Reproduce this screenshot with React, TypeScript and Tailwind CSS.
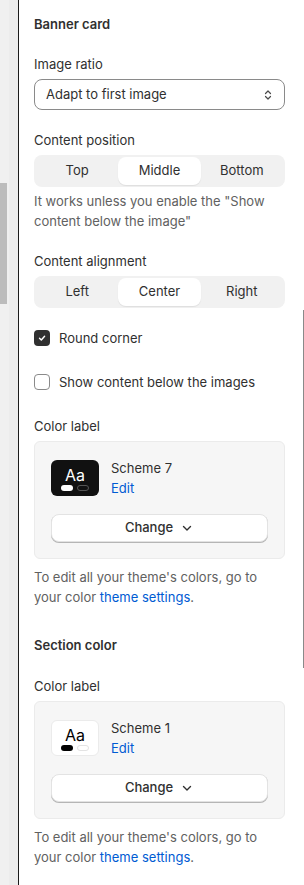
import React from 'react';

const font = { fontFamily: 'Inter, "Noto Sans", sans-serif' };

function Segmented({ options, active }: { options: string[]; active: string }) {
  return (
    <div className="flex h-[32px] rounded-lg bg-[#f1f1f1] p-[2px]">
      {options.map((o) => (
        <div
          key={o}
          className={
            o === active
              ? 'flex flex-1 items-center justify-center rounded-lg bg-white text-[13px] text-[#303030] shadow-[0_1px_1px_rgba(0,0,0,0.08)]'
              : 'flex flex-1 items-center justify-center text-[13px] text-[#303030]'
          }
        >
          {o}
        </div>
      ))}
    </div>
  );
}

function Swatch({ dark }: { dark: boolean }) {
  return (
    <div
      className={
        dark
          ? 'flex h-[36px] w-[48px] flex-col items-center justify-center rounded-md bg-[#111111]'
          : 'flex h-[36px] w-[48px] flex-col items-center justify-center rounded-md border border-[#ebebeb] bg-white'
      }
    >
      <span className={dark ? 'text-[16px] leading-[18px] text-white' : 'text-[16px] leading-[18px] text-black'}>Aa</span>
      <div className="mt-[1px] flex gap-[4px]">
        <span className={dark ? 'h-[6px] w-[12px] rounded-full bg-white' : 'h-[6px] w-[12px] rounded-full bg-black'} />
        <span
          className={
            dark
              ? 'h-[6px] w-[12px] rounded-full border border-[#555555]'
              : 'h-[6px] w-[12px] rounded-full border border-[#e3e3e3]'
          }
        />
      </div>
    </div>
  );
}

function ColorCard({ scheme, dark }: { scheme: string; dark: boolean }) {
  return (
    <div>
      <div className="text-[13px] leading-[20px] text-[#303030]">Color label</div>
      <div className="mt-[5px] rounded-md border border-[#ebebeb] bg-[#f6f6f6] px-[16px] pb-[16px] pt-[16px]">
        <div className="flex items-center gap-[12px]">
          <Swatch dark={dark} />
          <div className="flex flex-col">
            <span className="text-[13px] leading-[20px] text-[#303030]">{scheme}</span>
            <span className="text-[13px] leading-[20px] text-[#005bd3]">Edit</span>
          </div>
        </div>
        <div className="mt-[16px] flex h-[28px] items-center justify-center gap-[7px] rounded-lg border border-[#e3e3e3] bg-white text-[13px] font-medium text-[#303030] shadow-[0_1px_0_#b5b5b5]">
          Change
          <svg width="14" height="14" viewBox="0 0 14 14" fill="none">
            <path d="M3.5 5.5 7 9 10.5 5.5" stroke="#303030" strokeWidth="1.4" strokeLinecap="round" strokeLinejoin="round" />
          </svg>
        </div>
      </div>
      <p className="mt-[8px] text-[13px] leading-[20px] text-[#616161]">
        To edit all your theme's colors, go to your color <span className="text-[#005bd3]">theme settings</span>.
      </p>
    </div>
  );
}

export default function App() {
  return (
    <div className="flex h-[885px] w-[304px] overflow-hidden bg-white" style={font}>
      {/* left rail */}
      <div className="flex w-[18px] shrink-0">
        <div className="flex w-[9px] flex-col bg-[#f0f0f0]">
          <div className="mt-[183px] h-[121px] w-[7px] bg-[#bcbcbc]" />
        </div>
        <div className="w-[9px] bg-[#ececec]" />
      </div>
      <div className="w-[1px] shrink-0 bg-[#1a1a1a]" />

      {/* settings panel */}
      <div className="flex-1 pl-[15px] pr-[18px] pt-[14px]">
        <h2 className="text-[13px] font-semibold leading-[20px] text-[#303030]">Banner card</h2>

        <div className="mt-[20px] text-[13px] leading-[20px] text-[#303030]">Image ratio</div>
        <div className="mt-[5px] flex h-[31px] items-center justify-between rounded-lg border border-[#8a8a8a] pl-[11px] pr-[9px] text-[13px] text-[#303030]">
          Adapt to first image
          <svg width="14" height="14" viewBox="0 0 14 14" fill="none">
            <path d="M4.5 5.5 7 3 9.5 5.5M4.5 8.5 7 11 9.5 8.5" stroke="#4a4a4a" strokeWidth="1.2" strokeLinecap="round" strokeLinejoin="round" />
          </svg>
        </div>

        <div className="mt-[20px] text-[13px] leading-[20px] text-[#303030]">Content position</div>
        <div className="mt-[5px]">
          <Segmented options={['Top', 'Middle', 'Bottom']} active="Middle" />
        </div>
        <p className="mt-[4px] text-[13px] leading-[20px] text-[#616161]">
          It works unless you enable the "Show content below the image"
        </p>

        <div className="mt-[20px] text-[13px] leading-[20px] text-[#303030]">Content alignment</div>
        <div className="mt-[5px]">
          <Segmented options={['Left', 'Center', 'Right']} active="Center" />
        </div>

        <div className="mt-[20px] flex items-center gap-[9px]">
          <span className="flex h-[16px] w-[16px] items-center justify-center rounded-[4px] bg-[#303030]">
            <svg width="10" height="10" viewBox="0 0 10 10" fill="none">
              <path d="M2.5 5.2 4.3 7 7.6 3.2" stroke="white" strokeWidth="1.4" strokeLinecap="round" strokeLinejoin="round" />
            </svg>
          </span>
          <span className="text-[13px] leading-[20px] text-[#303030]">Round corner</span>
        </div>

        <div className="mt-[24px] flex items-center gap-[9px]">
          <span className="h-[16px] w-[16px] rounded-[4px] border border-[#8a8a8a] bg-white" />
          <span className="text-[13px] leading-[20px] text-[#303030]">Show content below the images</span>
        </div>

        <div className="mt-[24px]">
          <ColorCard scheme="Scheme 7" dark={true} />
        </div>

        <h2 className="mt-[28px] text-[13px] font-semibold leading-[20px] text-[#303030]">Section color</h2>
        <div className="mt-[21px]">
          <ColorCard scheme="Scheme 1" dark={false} />
        </div>
      </div>

      {/* inner scroll indicator */}
      <div className="flex w-[1px] shrink-0 flex-col">
        <div className="mt-[310px] h-[358px] w-[1px] bg-[#8a8a8a]" />
      </div>
    </div>
  );
}
